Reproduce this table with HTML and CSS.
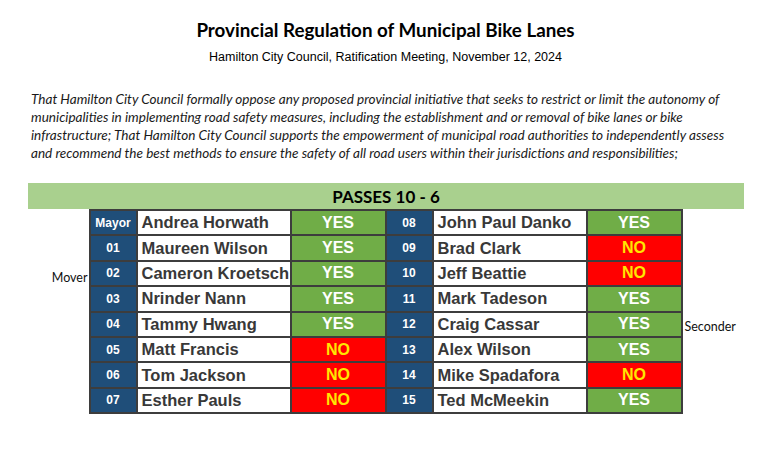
FILE: index.html
```html
<!DOCTYPE html>
<html>
<head>
<meta charset="utf-8">
<link rel="stylesheet" href="styles.css">
</head>
<body>
<header class="head">
  <h1 class="title">Provincial Regulation of Municipal Bike Lanes</h1>
  <p class="subtitle">Hamilton City Council, Ratification Meeting, November 12, 2024</p>
</header>
<p class="motion">
  <span class="line">That Hamilton City Council formally oppose any proposed provincial initiative that seeks to restrict or limit the autonomy of</span>
  <span class="line">municipalities in implementing road safety measures, including the establishment and or removal of bike lanes or bike</span>
  <span class="line">infrastructure; That Hamilton City Council supports the empowerment of municipal road authorities to independently assess</span>
  <span class="line">and recommend the best methods to ensure the safety of all road users within their jurisdictions and responsibilities;</span>
</p>
<div class="banner">PASSES 10 - 6</div>
<div class="vote-area">
  <div class="side side-left"><span class="note row-3">Mover</span></div>
  <div class="table">
    <div class="num">Mayor</div><div class="name">Andrea Horwath</div><div class="vote yes">YES</div>
    <div class="num">08</div><div class="name">John Paul Danko</div><div class="vote yes">YES</div>

    <div class="num">01</div><div class="name">Maureen Wilson</div><div class="vote yes">YES</div>
    <div class="num">09</div><div class="name">Brad Clark</div><div class="vote no">NO</div>

    <div class="num">02</div><div class="name">Cameron Kroetsch</div><div class="vote yes">YES</div>
    <div class="num">10</div><div class="name">Jeff Beattie</div><div class="vote no">NO</div>

    <div class="num">03</div><div class="name">Nrinder Nann</div><div class="vote yes">YES</div>
    <div class="num">11</div><div class="name">Mark Tadeson</div><div class="vote yes">YES</div>

    <div class="num">04</div><div class="name">Tammy Hwang</div><div class="vote yes">YES</div>
    <div class="num">12</div><div class="name">Craig Cassar</div><div class="vote yes">YES</div>

    <div class="num">05</div><div class="name">Matt Francis</div><div class="vote no">NO</div>
    <div class="num">13</div><div class="name">Alex Wilson</div><div class="vote yes">YES</div>

    <div class="num">06</div><div class="name">Tom Jackson</div><div class="vote no">NO</div>
    <div class="num">14</div><div class="name">Mike Spadafora</div><div class="vote no">NO</div>

    <div class="num">07</div><div class="name">Esther Pauls</div><div class="vote no">NO</div>
    <div class="num">15</div><div class="name">Ted McMeekin</div><div class="vote yes">YES</div>
  </div>
  <div class="side side-right"><span class="note row-5">Seconder</span></div>
</div>
</body>
</html>
```

FILE: styles.css
```css
html, body {
  margin: 0;
  padding: 0;
  background: #ffffff;
}

body {
  font-family: "Liberation Sans", Arial, sans-serif;
  color: #000;
}

.head {
  padding-top: 18px;
  text-align: center;
}

.title {
  margin: 0;
  font-family: Lato, "Open Sans", sans-serif;
  font-weight: 700;
  font-size: 18.8px;
  line-height: 24px;
  color: #000;
}

.subtitle {
  margin: 7px 0 0;
  font-family: "Liberation Sans", Arial, sans-serif;
  font-size: 12.5px;
  line-height: 16px;
  color: #000;
}

.motion {
  margin: 25px 0 0;
  padding-left: 31px;
  font-family: Lato, "Open Sans", sans-serif;
  font-style: italic;
  font-size: 13.55px;
  line-height: 18px;
  color: #1a1a1a;
}

.line {
  display: block;
  white-space: nowrap;
}

.banner {
  margin: 21px 0 0 28px;
  width: 716px;
  height: 26px;
  background: #a9d08e;
  font-family: Lato, "Open Sans", sans-serif;
  font-weight: 700;
  font-size: 17px;
  line-height: 27px;
  text-align: center;
  color: #000;
}

.vote-area {
  display: grid;
  grid-template-columns: 1fr auto 1fr;
}

.side {
  display: grid;
  grid-template-rows: repeat(8, 23.4px);
  row-gap: 2px;
  padding-top: 2px;
  font-family: Lato, "Open Sans", sans-serif;
  font-size: 12.5px;
  color: #111;
}

.side-left {
  justify-items: end;
  padding-right: 1px;
}

.side-right {
  justify-items: start;
  padding-left: 2px;
}

.note {
  align-self: center;
  line-height: 16px;
}

.row-3 { grid-row: 3; margin-top: 10px; }
.row-5 { grid-row: 5; margin-top: 5px; }

.table {
  display: grid;
  grid-template-columns: 45px 152px 93px 45px 152px 93px;
  grid-auto-rows: 23.4px;
  gap: 2px;
  padding: 2px;
  background: #3d3d3d;
  width: max-content;
}

.table > div {
  display: flex;
  align-items: center;
  white-space: nowrap;
  font-weight: 700;
}

.num {
  justify-content: center;
  background: #1f4e79;
  color: #ffffff;
  font-size: 12px;
}

.name {
  background: #ffffff;
  color: #383838;
  font-size: 16.5px;
  padding-left: 4px;
}

.vote {
  justify-content: center;
  font-size: 16px;
}

.yes {
  background: #70ad47;
  color: #ffffff;
}

.no {
  background: #ff0000;
  color: #ffe600;
}
```
